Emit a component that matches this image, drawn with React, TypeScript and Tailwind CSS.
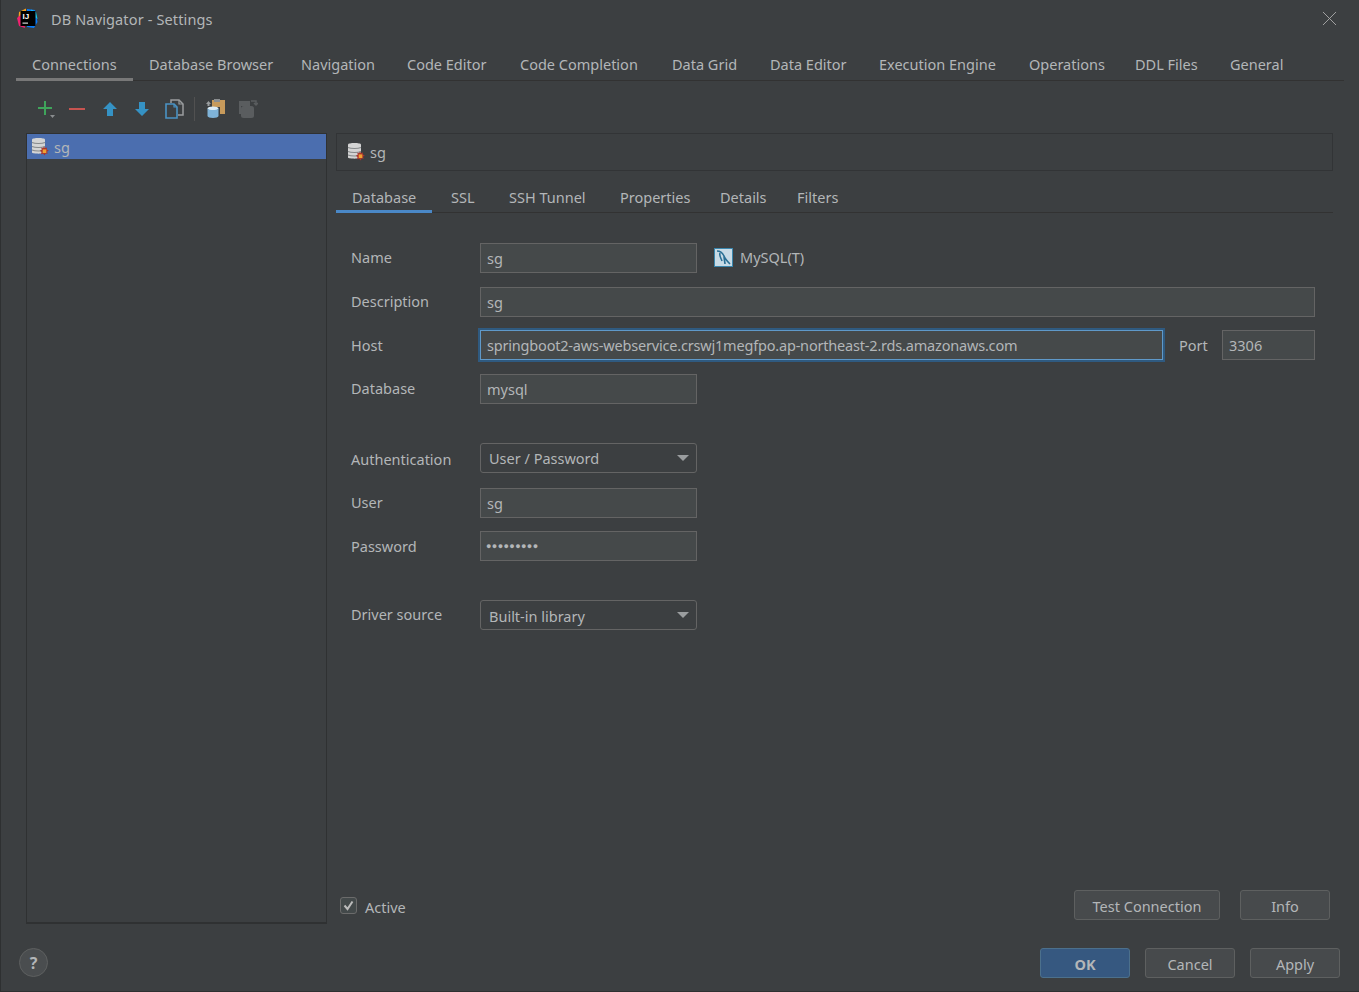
import React from 'react';
import { X } from 'lucide-react';

const mainTabs = [
  { label: 'Connections', width: 117 },
  { label: 'Database Browser', width: 152 },
  { label: 'Navigation', width: 106 },
  { label: 'Code Editor', width: 113 },
  { label: 'Code Completion', width: 152 },
  { label: 'Data Grid', width: 98 },
  { label: 'Data Editor', width: 109 },
  { label: 'Execution Engine', width: 150 },
  { label: 'Operations', width: 106 },
  { label: 'DDL Files', width: 95 },
  { label: 'General', width: 100 },
];

const subTabs = [
  { label: 'Database', width: 96 },
  { label: 'SSL', width: 58 },
  { label: 'SSH Tunnel', width: 111 },
  { label: 'Properties', width: 100 },
  { label: 'Details', width: 77 },
  { label: 'Filters', width: 80 },
];

const AppLogo = () => (
  <svg width="22" height="22" viewBox="0 0 22 22">
    <path d="M3 4 L10 0.5 L10 8 L2.5 10 Z" fill="#f7a11f" />
    <path d="M1 10 L7 5 L9 20 L3 18 Z" fill="#f0216f" />
    <path d="M11 1 L19 2 L21.5 14 L18 20 L11 19 Z" fill="#087cfa" />
    <path d="M15 1.5 L20 4 L21.5 11 L17 8 Z" fill="#18c8e8" />
    <rect x="4.5" y="3" width="15" height="15" fill="#000" />
    <text x="6.5" y="11" fontSize="8" fontWeight="700" fill="#fff" fontFamily="Liberation Sans, sans-serif">IJ</text>
    <rect x="6.5" y="14.6" width="5.5" height="1" fill="#fff" />
  </svg>
);

const DbIcon = () => (
  <svg width="18" height="20" viewBox="0 0 18 20" className="shrink-0">
    <path d="M1 2.5 C1 0.5 14 0.5 14 2.5 V15.5 C14 17 1 17 1 15.5 Z" fill="#d4d4d4" />
    <path d="M1 5.5 C4 6.8 11 6.8 14 5.5 M1 9.5 C4 10.8 11 10.8 14 9.5 M1 13 C4 14.3 11 14.3 14 13" fill="none" stroke="#85888a" strokeWidth="1.1" />
    <path d="M13 9.5 L14 11 L16 10.5 L15.8 12.5 L17.8 13.5 L16 14.7 L16.8 16.8 L14.8 16.6 L13.5 18.5 L12.2 16.8 L10 17.3 L10.5 15 L8.8 13.8 L10.7 12.8 L10.3 10.6 L12 11.2 Z" fill="#a9362e" />
    <rect x="11.7" y="12.4" width="3.6" height="3.6" fill="#f0a232" />
  </svg>
);

const MySqlIcon = () => (
  <svg width="20" height="20" viewBox="0 0 20 20" className="shrink-0">
    <rect x="0.5" y="0.5" width="18" height="18" fill="#c8dbe6" stroke="#3a86ad" />
    <path d="M3 3 C6 3 8 4 10 8 C11 11 13 13 16 16 M6 5 C5 8 7 10 8 13 M10 8 C10 11 11 14 11 16" fill="none" stroke="#2a6f94" strokeWidth="1.6" />
  </svg>
);

const ToolbarButton = ({ children }: { children: React.ReactNode }) => (
  <div className="w-[32.4px] h-[28px] flex items-center justify-center">{children}</div>
);

const Field = ({ className, children, focused }: { className: string; children: React.ReactNode; focused?: boolean }) => (
  <div
    className={
      focused
        ? `h-[30px] flex items-center pl-[6px] pt-[2px] bg-[#45494a] border border-[#5f99c9] outline-2 outline-[#2f5a80] ${className}`
        : `h-[30px] flex items-center pl-[6px] pt-[2px] bg-[#45494a] border border-[#646464] ${className}`
    }
  >
    {children}
  </div>
);

const Select = ({ value, textClass }: { value: string; textClass: string }) => (
  <div className="w-[217px] h-[30px] flex items-center justify-between pl-[8px] pr-[7px] border border-[#646464] rounded-[3px] bg-[#3c3f41]">
    <span className={textClass}>{value}</span>
    <span className="w-0 h-0 border-l-[6px] border-r-[6px] border-t-[6px] border-l-transparent border-r-transparent border-t-[#9a9d9f]" />
  </div>
);

const Row = ({ label, className, labelClass, children }: { label: string; className: string; labelClass?: string; children: React.ReactNode }) => (
  <div className={`flex items-center ${className}`}>
    <div className={`w-[144px] pl-[15px] shrink-0 ${labelClass ?? 'pt-[2px]'}`}>{label}</div>
    {children}
  </div>
);

const Button = ({ className, children }: { className: string; children: React.ReactNode }) => (
  <button className={`h-[30px] pt-[4px] flex items-center justify-center rounded-[3px] border border-[#5e6060] bg-[#474a4c] text-[#b3b6b8] ${className}`}>
    {children}
  </button>
);

export default function App() {
  return (
    <div className="w-[1359px] h-[992px] flex flex-col overflow-hidden bg-[#3c3f41] text-[#b3b6b8] text-[14.5px] border-l border-b border-[#2e3031] font-['Noto_Sans',sans-serif]">
      {/* Title bar */}
      <div className="h-[38px] shrink-0 flex items-center pl-[15px] pr-[17px]">
        <AppLogo />
        <span className="ml-[13px] pt-[2px] flex-1 tracking-[0.14px]">DB Navigator - Settings</span>
        <X size={25} strokeWidth={0.9} className="text-[#a8a8a8] -mt-[2px]" />
      </div>

      {/* Main tabs */}
      <div className="h-[43px] shrink-0 ml-[15px] mr-[15px] flex items-end border-b border-[#323232]">
        {mainTabs.map((tab, i) => (
          <div
            key={tab.label}
            style={{ width: tab.width }}
            className={
              i === 0
                ? 'h-[42px] -mb-px flex items-center pl-4 whitespace-nowrap border-b-[3px] border-[#787878] pt-[12px]'
                : 'h-[42px] -mb-px flex items-center pl-4 whitespace-nowrap pt-[12px] pb-[3px]'
            }
          >
            {tab.label}
          </div>
        ))}
      </div>

      {/* Toolbar */}
      <div className="h-[52px] shrink-0 flex items-center pl-[28px] pt-[3px]">
        <ToolbarButton>
          <svg width="20" height="20" viewBox="0 0 20 20" className="ml-[2px]">
            <path d="M9 2 V16 M2 9 H16" stroke="#3fa45b" strokeWidth="2" />
            <path d="M14 16 H19 L16.5 19 Z" fill="#8a8d8f" />
          </svg>
        </ToolbarButton>
        <ToolbarButton>
          <svg width="16" height="16" viewBox="0 0 16 16" className="-ml-[1px]">
            <path d="M0 8 H16" stroke="#c75450" strokeWidth="2" />
          </svg>
        </ToolbarButton>
        <ToolbarButton>
          <svg width="16" height="16" viewBox="0 0 16 16">
            <path d="M8 1 L15 8 H11 V15 H5 V8 H1 Z" fill="#3592c4" />
          </svg>
        </ToolbarButton>
        <ToolbarButton>
          <svg width="16" height="16" viewBox="0 0 16 16">
            <path d="M8 15 L15 8 H11 V1 H5 V8 H1 Z" fill="#3592c4" />
          </svg>
        </ToolbarButton>
        <ToolbarButton>
          <svg width="19" height="20" viewBox="0 0 19 20">
            <path d="M6 4 V1 H14 L18 5 V16 H13" fill="none" stroke="#9a9d9f" strokeWidth="1.5" />
            <path d="M14 1 V5 H18" fill="none" stroke="#9a9d9f" strokeWidth="1.2" />
            <path d="M1 5 H9 L12 8 V19 H1 Z" fill="#3c3f41" stroke="#4a93c4" strokeWidth="1.6" />
            <path d="M9 5 V8 H12" fill="none" stroke="#4a93c4" strokeWidth="1.2" />
          </svg>
        </ToolbarButton>
        <div className="w-px h-[24px] bg-[#515151] mx-[3px]" />
        <ToolbarButton>
          <svg width="21" height="21" viewBox="0 0 21 21" className="ml-[2px]">
            <path d="M7 2 H20 V16 H15 V9 H7 Z" fill="#c79a5b" />
            <rect x="9" y="1" width="6" height="3" fill="#8a8d8f" />
            <path d="M1 6 L3.5 3 L6 6 H4.5 V8 H2.5 V6 Z" fill="#9a9d9f" />
            <ellipse cx="8" cy="10.5" rx="5.5" ry="2" fill="#dcecf6" />
            <path d="M2.5 10.5 V18 C2.5 20.5 13.5 20.5 13.5 18 V10.5 C11.5 12.5 4.5 12.5 2.5 10.5 Z" fill="#7fb3d8" />
          </svg>
        </ToolbarButton>
        <ToolbarButton>
          <svg width="21" height="21" viewBox="0 0 21 21" className="ml-[2px]">
            <path d="M2 3 H13 V8 H4 V16 H2 Z" fill="#5a5d5f" />
            <rect x="4" y="8" width="13" height="12" rx="2.5" fill="#5a5d5f" />
            <path d="M14 3 H19 V7 M17 5 L19 7 L21 5" fill="none" stroke="#5a5d5f" strokeWidth="1.5" />
          </svg>
        </ToolbarButton>
      </div>

      {/* Body */}
      <div className="flex-1 min-h-0 flex pl-[25px] pr-[26px]">
        <div className="w-[301px] shrink-0 h-[791px] border border-[#2f3132] border-b-2">
          <div className="h-[25px] flex items-center pl-[4px] bg-[#4b6eaf]">
            <DbIcon />
            <span className="ml-[5px] mt-[3px]">sg</span>
          </div>
        </div>

        <div className="flex-1 ml-[9px] min-w-0 flex flex-col">
          <div className="h-[38px] shrink-0 flex items-center pl-[10px] border border-[#323436]">
            <DbIcon />
            <span className="ml-[5px] mt-[2px]">sg</span>
          </div>

          <div className="h-[30px] mt-[12px] shrink-0 flex items-end border-b border-[#323232]">
            {subTabs.map((tab, i) => (
              <div
                key={tab.label}
                style={{ width: tab.width }}
                className={
                  i === 0
                    ? 'h-[30px] -mb-px mr-[3px] flex items-center pl-4 pt-[3px] whitespace-nowrap border-b-[3px] border-[#4a88c7]'
                    : 'h-[30px] -mb-px flex items-center pl-4 pt-[3px] whitespace-nowrap pb-[3px]'
                }
              >
                {tab.label}
              </div>
            ))}
          </div>

          <Row label="Name" className="mt-[30px]" labelClass="pt-0">
            <Field className="w-[217px]">sg</Field>
            <span className="ml-[17px] flex items-center gap-[6px]">
              <MySqlIcon />
              MySQL(T)
            </span>
          </Row>
          <Row label="Description" className="mt-[14px] pr-[18px]" labelClass="pt-0">
            <Field className="flex-1">sg</Field>
          </Row>
          <Row label="Host" className="mt-[13px] pr-[18px]">
            <Field focused className="w-[683px] tracking-[-0.19px]">springboot2-aws-webservice.crswj1megfpo.ap-northeast-2.rds.amazonaws.com</Field>
            <span className="ml-[16px] pt-[1px] w-[43px]">Port</span>
            <Field className="flex-1">3306</Field>
          </Row>
          <Row label="Database" className="mt-[14px]" labelClass="pt-0">
            <Field className="w-[217px]">mysql</Field>
          </Row>
          <Row label="Authentication" className="mt-[39px]" labelClass="pt-[3px]">
            <Select value="User / Password" textClass="pt-[2px]" />
          </Row>
          <Row label="User" className="mt-[15px]" labelClass="pt-0">
            <Field className="w-[217px]">sg</Field>
          </Row>
          <Row label="Password" className="mt-[13px]">
            <Field className="w-[217px]">
              <span className="text-[9px] tracking-[0.4px] -mt-[2px] -ml-[1px]">●●●●●●●●●</span>
            </Field>
          </Row>
          <Row label="Driver source" className="mt-[39px]" labelClass="pt-0">
            <Select value="Built-in library" textClass="pt-[4px]" />
          </Row>

          <div className="flex-1" />

          <div className="h-[30px] mb-[28px] shrink-0 flex items-center pr-[3px]">
            <span className="ml-[4px] w-[17px] h-[17px] rounded-[3px] border border-[#6b6b6b] bg-[#43494a] flex items-center justify-center">
              <svg width="13" height="13" viewBox="0 0 13 13">
                <path d="M2.5 6.5 L5.5 10 L10.5 2.5" fill="none" stroke="#bbbbbb" strokeWidth="2" />
              </svg>
            </span>
            <span className="ml-[8px] pt-[6px] flex-1">Active</span>
            <Button className="w-[146px]">Test Connection</Button>
            <Button className="w-[90px] ml-[20px]">Info</Button>
          </div>
        </div>
      </div>

      {/* Footer */}
      <div className="h-[43px] shrink-0 flex items-start pl-[18px] pr-[19px]">
        <div className="w-[29px] h-[29px] rounded-full bg-[#4a4d4f] border border-[#5e6060] flex items-center justify-center font-bold text-[16px]">?</div>
        <div className="flex-1" />
        <Button className="w-[90px] !bg-[#365880] !border-[#4c708c] font-bold">OK</Button>
        <Button className="w-[90px] ml-[15px]">Cancel</Button>
        <Button className="w-[90px] ml-[15px]">Apply</Button>
      </div>
    </div>
  );
}
